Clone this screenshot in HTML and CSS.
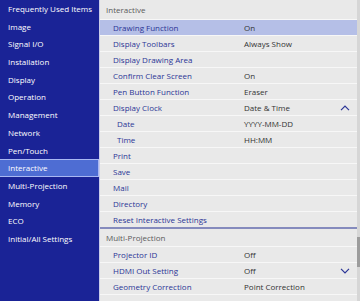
FILE: index.html
```html
<!DOCTYPE html>
<html lang="en">

<head>
    <meta charset="UTF-8">
    <meta name="viewport" content="width=device-width, initial-scale=1.0">
    <title>Interactive</title>
    <link rel="stylesheet" href="styles.css">
</head>

<body>
    <div class="screen">
        <!-- main menu -->
        <ul class="side">
            <li>Frequently Used Items</li>
            <li>Image</li>
            <li>Signal I/O</li>
            <li>Installation</li>
            <li>Display</li>
            <li>Operation</li>
            <li>Management</li>
            <li>Network</li>
            <li>Pen/Touch</li>
            <li class="active">Interactive</li>
            <li>Multi-Projection</li>
            <li>Memory</li>
            <li>ECO</li>
            <li>Initial/All Settings</li>
        </ul>

        <!-- sub menu -->
        <div class="panel">
            <div class="list">
                <div class="head first">Interactive</div>
                <div class="row sel"><span class="label">Drawing Function</span><span class="value">On</span></div>
                <div class="row"><span class="label">Display Toolbars</span><span class="value">Always Show</span></div>
                <div class="row"><span class="label">Display Drawing Area</span></div>
                <div class="row"><span class="label">Confirm Clear Screen</span><span class="value">On</span></div>
                <div class="row"><span class="label">Pen Button Function</span><span class="value">Eraser</span></div>
                <div class="row">
                    <span class="label">Display Clock</span><span class="value">Date &amp; Time</span>
                    <svg class="chev" width="10" height="6" viewBox="0 0 10 6"><path d="M1 5.2 L5 1.2 L9 5.2" fill="none" stroke="#2b3596" stroke-width="1.2"/></svg>
                </div>
                <div class="row"><span class="label sub">Date</span><span class="value">YYYY-MM-DD</span></div>
                <div class="row"><span class="label sub">Time</span><span class="value">HH:MM</span></div>
                <div class="row"><span class="label">Print</span></div>
                <div class="row"><span class="label">Save</span></div>
                <div class="row"><span class="label">Mail</span></div>
                <div class="row"><span class="label">Directory</span></div>
                <div class="row last"><span class="label">Reset Interactive Settings</span></div>

                <div class="head">Multi-Projection</div>
                <div class="row"><span class="label">Projector ID</span><span class="value">Off</span></div>
                <div class="row">
                    <span class="label">HDMI Out Setting</span><span class="value">Off</span>
                    <svg class="chev" width="10" height="6" viewBox="0 0 10 6"><path d="M1 0.8 L5 4.8 L9 0.8" fill="none" stroke="#2b3596" stroke-width="1.2"/></svg>
                </div>
                <div class="row"><span class="label">Geometry Correction</span><span class="value">Point Correction</span></div>
                <div class="row"><span class="label">Edge Blending</span></div>
            </div>
            <div class="scrollbar">
                <div class="thumb"></div>
            </div>
        </div>
    </div>
</body>

</html>
```

FILE: styles.css
```css
* {
    margin: 0;
    padding: 0;
    list-style: none;
    box-sizing: border-box;
}

body {
    width: 360px;
    height: 301px;
    overflow: hidden;
    font-family: "Open Sans", "Liberation Sans", sans-serif;
    font-size: 8px;
    background: #1a2396;
}

.screen {
    display: flex;
    height: 301px;
}

/* 左側主選單 */
.side {
    width: 99px;
    flex: none;
    background: #1a2396;
    color: #fff;
    font-weight: 500;
}

.side li {
    height: 17.7px;
    line-height: 17.7px;
    padding-left: 8px;
    white-space: nowrap;
}

.side li.active {
    background: #4e6dd3;
    border: 1px solid #a9b8f2;
    border-left: none;
    line-height: 15.7px;
}

/* 右側子選單 */
.panel {
    flex: 1;
    display: flex;
    background: #e9e9e9;
    border-left: 1px solid #c9cce9;
    overflow: hidden;
}

.list {
    flex: 1;
}

.head {
    height: 18px;
    line-height: 18px;
    padding-left: 6px;
    color: #5a5a5a;
    border-bottom: 1px solid #f7f7f7;
}

.head.first {
    height: 20px;
    line-height: 20px;
}

.row {
    display: flex;
    align-items: center;
    height: 16px;
    border-bottom: 1px solid #f7f7f7;
    font-weight: 500;
}

.row.sel {
    background: #b5bfe7;
}

.row.last {
    height: 17px;
    border-bottom: 2px solid #858bbd;
}

.label {
    width: 144px;
    flex: none;
    padding-left: 13px;
    color: #2b3596;
    white-space: nowrap;
}

.label.sub {
    padding-left: 17px;
}

.value {
    color: #333;
    white-space: nowrap;
}

.chev {
    margin-left: auto;
    margin-right: 7px;
}

.scrollbar {
    width: 3px;
    background: #d6d6d6;
    padding-top: 237px;
}

.thumb {
    height: 30px;
    background: #9c9c9c;
}
```
